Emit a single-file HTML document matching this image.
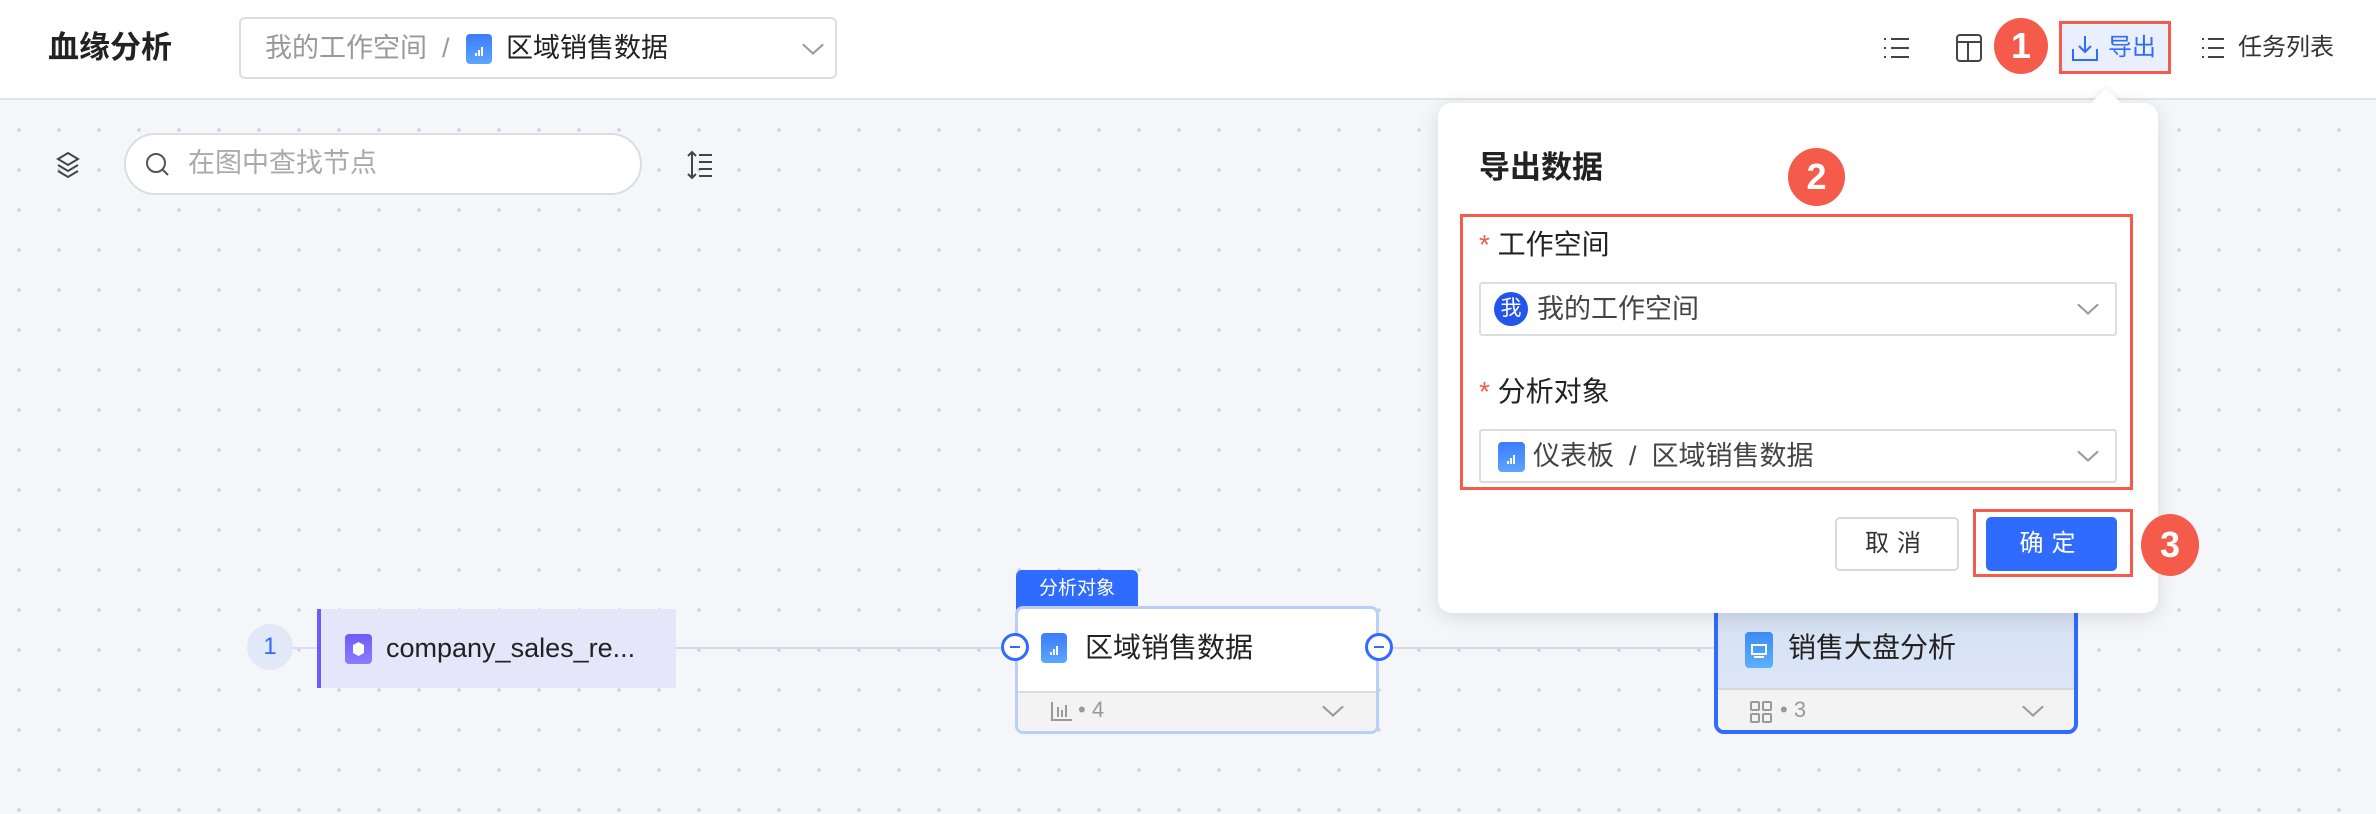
<!DOCTYPE html>
<html><head><meta charset="utf-8"><style>
*{margin:0;padding:0;box-sizing:border-box}
body{width:2376px;height:814px;position:relative;overflow:hidden;font-family:"Liberation Sans","Noto Sans CJK SC",sans-serif;color:#1f1f1f;background:#f5f6fa;line-height:1}
.a{position:absolute}
.canvas{left:0;top:100px;width:2376px;height:714px;background-color:#f5f6fa;background-image:radial-gradient(circle,#cfd2d9 1.6px,transparent 2px);background-size:40px 40px;background-position:-1px 10px}
.hdr{left:0;top:0;width:2376px;height:100px;background:#fff;border-bottom:2px solid #e3e4e8}
.sel{border:2px solid #dcdde0;border-radius:6px;background:#fff}
.chev{width:14px;height:14px;border-right:2px solid #9a9a9a;border-bottom:2px solid #9a9a9a;transform:scaleX(1.1) rotate(45deg)}
.bico{border-radius:4px;background:linear-gradient(#3d7bff,#5aa6ff)}
.badge{border-radius:50%;background:#f55b4a;color:#fff;font-weight:bold;text-align:center;font-size:36px}
.red{border:3px solid #f55b4a}
</style></head><body>
<div class="a canvas"></div>
<div class="a hdr"></div>
<div class="a" style="left:48px;top:32px;font-size:31px;font-weight:bold;color:#222">血缘分析</div>
<div class="a sel" style="left:239px;top:17px;width:598px;height:62px"></div>
<div class="a" style="left:265px;top:35px;font-size:27px;color:#999">我的工作空间&nbsp;&nbsp;/</div>
<div class="a bico" style="left:466px;top:34px;width:26px;height:30px"></div>
<svg class="a" style="left:466px;top:34px" width="26" height="30"><path d="M10 22v-3M13 22v-6M16 22v-9" stroke="#fff" stroke-width="2"/></svg>
<div class="a" style="left:506px;top:35px;font-size:27px;color:#222">区域销售数据</div>
<div class="a chev" style="left:806px;top:38px"></div>
<svg class="a" style="left:1882px;top:35px" width="30" height="26"><path d="M2 4h2M2 13h2M2 22h2M9 4h18M9 13h18M9 22h18" stroke="#444" stroke-width="2"/></svg>
<svg class="a" style="left:1955px;top:33px" width="28" height="30"><rect x="2" y="2" width="24" height="26" rx="3" fill="none" stroke="#444" stroke-width="2"/><path d="M2 9h24M13 9v19" stroke="#444" stroke-width="2"/></svg>
<div class="a badge" style="left:1994px;top:18px;width:54px;height:56px;line-height:56px">1</div>
<div class="a" style="left:2059px;top:21px;width:112px;height:53px;background:#e9effd"></div>
<div class="a red" style="left:2059px;top:21px;width:112px;height:53px"></div>
<svg class="a" style="left:2070px;top:33px" width="30" height="30"><path d="M15 3v16M9 13l6 6 6-6M3 16v11h24V16" fill="none" stroke="#2f6bff" stroke-width="2"/></svg>
<div class="a" style="left:2108px;top:36px;font-size:24px;color:#2f6bff">导出</div>
<svg class="a" style="left:2200px;top:35px" width="26" height="26"><path d="M2 4h2M2 13h2M2 22h2M8 4h16M8 13h16M8 22h16" stroke="#444" stroke-width="2"/></svg>
<div class="a" style="left:2238px;top:36px;font-size:24px;color:#333">任务列表</div>
<svg class="a" style="left:54px;top:150px" width="28" height="30"><path d="M14 3l10 6-10 6-10-6z" fill="none" stroke="#444" stroke-width="2"/><path d="M4 15l10 6 10-6M4 21l10 6 10-6" fill="none" stroke="#444" stroke-width="2"/></svg>
<div class="a" style="left:124px;top:133px;width:518px;height:62px;border:2px solid #dcdde0;border-radius:31px;background:#fff"></div>
<svg class="a" style="left:144px;top:151px" width="28" height="28"><circle cx="12" cy="12" r="9" fill="none" stroke="#555" stroke-width="2"/><path d="M19 19l5 5" stroke="#555" stroke-width="2"/></svg>
<div class="a" style="left:188px;top:150px;font-size:27px;color:#aaa">在图中查找节点</div>
<svg class="a" style="left:686px;top:150px" width="28" height="30"><path d="M6 2v26M2 6l4-4 4 4M2 24l4 4 4-4M13 5h13M13 12h13M13 19h13M13 26h13" fill="none" stroke="#444" stroke-width="2"/></svg>
<div class="a" style="left:676px;top:647px;width:1040px;height:2px;background:#d8dae0"></div>
<div class="a" style="left:247px;top:624px;width:46px;height:46px;border-radius:50%;background:#e1e8f8;color:#2f6bff;font-size:24px;text-align:center;line-height:46px">1</div>
<div class="a" style="left:293px;top:647px;width:24px;height:2px;background:#d6e0f5"></div>
<div class="a" style="left:317px;top:609px;width:359px;height:79px;background:#e6e6fb;border-left:4px solid #6b5cff"></div>
<div class="a" style="left:345px;top:634px;width:27px;height:30px;border-radius:4px;background:linear-gradient(#6c5cf6,#8a7dff)"></div>
<svg class="a" style="left:345px;top:634px" width="27" height="30"><path d="M8 11l5.5-3 5.5 3v8l-5.5 3-5.5-3z" fill="#fff"/></svg>
<div class="a" style="left:386px;top:635px;font-size:27px;color:#222">company_sales_re...</div>
<div class="a" style="left:1016px;top:570px;width:122px;height:40px;background:#2f6bff;border-radius:6px 6px 0 0;color:#fff;font-size:19px;text-align:center;line-height:38px">分析对象</div>
<div class="a" style="left:1015px;top:606px;width:364px;height:128px;border:3px solid #b9cff8;border-radius:8px;background:#fff;overflow:hidden"><div style="position:absolute;left:0;top:82px;width:100%;height:50px;background:#f3f3f3;border-top:2px solid #dcdcdc"></div></div>
<div class="a bico" style="left:1041px;top:633px;width:26px;height:30px"></div>
<svg class="a" style="left:1041px;top:633px" width="26" height="30"><path d="M10 22v-3M13 22v-6M16 22v-9" stroke="#fff" stroke-width="2"/></svg>
<div class="a" style="left:1085px;top:634px;font-size:28px;color:#222">区域销售数据</div>
<svg class="a" style="left:1050px;top:700px" width="24" height="22"><path d="M2 2v18h20M8 17V7M12 17V10M16 17V5" stroke="#999" stroke-width="2" fill="none"/></svg>
<div class="a" style="left:1078px;top:699px;font-size:22px;color:#999">• 4</div>
<div class="a chev" style="left:1326px;top:700px"></div>
<div class="a" style="left:1001px;top:633px;width:28px;height:28px;border-radius:50%;border:3px solid #2f6bff;background:#fff"><div style="position:absolute;left:6px;top:10px;width:10px;height:2px;background:#2f6bff"></div></div>
<div class="a" style="left:1365px;top:633px;width:28px;height:28px;border-radius:50%;border:3px solid #2f6bff;background:#fff"><div style="position:absolute;left:6px;top:10px;width:10px;height:2px;background:#2f6bff"></div></div>
<div class="a" style="left:1714px;top:600px;width:364px;height:134px;border:4px solid #2f6bff;border-radius:10px;background:linear-gradient(#d5e0f1,#dfe9fb);overflow:hidden"><div style="position:absolute;left:0;top:84px;width:100%;height:50px;background:#f3f3f3;border-top:2px solid #d6d6d6"></div></div>
<div class="a" style="left:1745px;top:632px;width:28px;height:36px;border-radius:4px;background:linear-gradient(#3d8bf5,#5cb0ff)"></div>
<svg class="a" style="left:1745px;top:632px" width="28" height="36"><rect x="7" y="13" width="14" height="9" fill="none" stroke="#fff" stroke-width="2"/><path d="M9 25h10" stroke="#fff" stroke-width="2"/></svg>
<div class="a" style="left:1788px;top:634px;font-size:28px;color:#222">销售大盘分析</div>
<svg class="a" style="left:1750px;top:701px" width="22" height="22"><rect x="1" y="1" width="8" height="8" rx="1" fill="none" stroke="#999" stroke-width="2"/><rect x="13" y="1" width="8" height="8" rx="1" fill="none" stroke="#999" stroke-width="2"/><rect x="1" y="13" width="8" height="8" rx="1" fill="none" stroke="#999" stroke-width="2"/><rect x="13" y="13" width="8" height="8" rx="1" fill="none" stroke="#999" stroke-width="2"/></svg>
<div class="a" style="left:1780px;top:699px;font-size:22px;color:#999">• 3</div>
<div class="a chev" style="left:2026px;top:700px"></div>
<div class="a" style="left:1438px;top:103px;width:720px;height:510px;background:#fff;border-radius:14px;box-shadow:0 4px 20px rgba(0,0,0,.12)"></div>
<div class="a" style="left:2096px;top:92px;width:20px;height:20px;background:#fff;transform:rotate(45deg);box-shadow:-2px -2px 4px rgba(0,0,0,.05)"></div>
<div class="a" style="left:1479px;top:152px;font-size:31px;font-weight:bold;color:#222">导出数据</div>
<div class="a badge" style="left:1788px;top:148px;width:57px;height:58px;line-height:58px">2</div>
<div class="a red" style="left:1460px;top:214px;width:673px;height:276px"></div>
<div class="a" style="left:1479px;top:231px;font-size:28px;color:#222"><span style="color:#f55b4a">*</span> 工作空间</div>
<div class="a sel" style="left:1479px;top:282px;width:638px;height:54px;border-radius:3px"></div>
<div class="a" style="left:1494px;top:292px;width:34px;height:34px;border-radius:50%;background:#2455e8;color:#fff;font-size:21px;text-align:center;line-height:34px">我</div>
<div class="a" style="left:1537px;top:296px;font-size:27px;color:#444">我的工作空间</div>
<div class="a chev" style="left:2081px;top:298px"></div>
<div class="a" style="left:1479px;top:378px;font-size:28px;color:#222"><span style="color:#f55b4a">*</span> 分析对象</div>
<div class="a sel" style="left:1479px;top:429px;width:638px;height:54px;border-radius:3px"></div>
<div class="a bico" style="left:1498px;top:442px;width:27px;height:30px"></div>
<svg class="a" style="left:1498px;top:442px" width="27" height="30"><path d="M10 22v-3M13 22v-6M16 22v-9" stroke="#fff" stroke-width="2"/></svg>
<div class="a" style="left:1533px;top:443px;font-size:27px;color:#444">仪表板&nbsp;&nbsp;/&nbsp;&nbsp;区域销售数据</div>
<div class="a chev" style="left:2081px;top:445px"></div>
<div class="a" style="left:1835px;top:517px;width:124px;height:54px;border:2px solid #d9d9d9;border-radius:5px;background:#fff;font-size:24px;text-align:center;line-height:50px;letter-spacing:8px;color:#333">取消</div>
<div class="a" style="left:1986px;top:517px;width:131px;height:54px;border-radius:5px;background:#2f6bff;font-size:24px;text-align:center;line-height:54px;letter-spacing:8px;color:#fff">确定</div>
<div class="a red" style="left:1973px;top:509px;width:160px;height:68px"></div>
<div class="a badge" style="left:2141px;top:514px;width:58px;height:62px;line-height:62px">3</div>
</body></html>
